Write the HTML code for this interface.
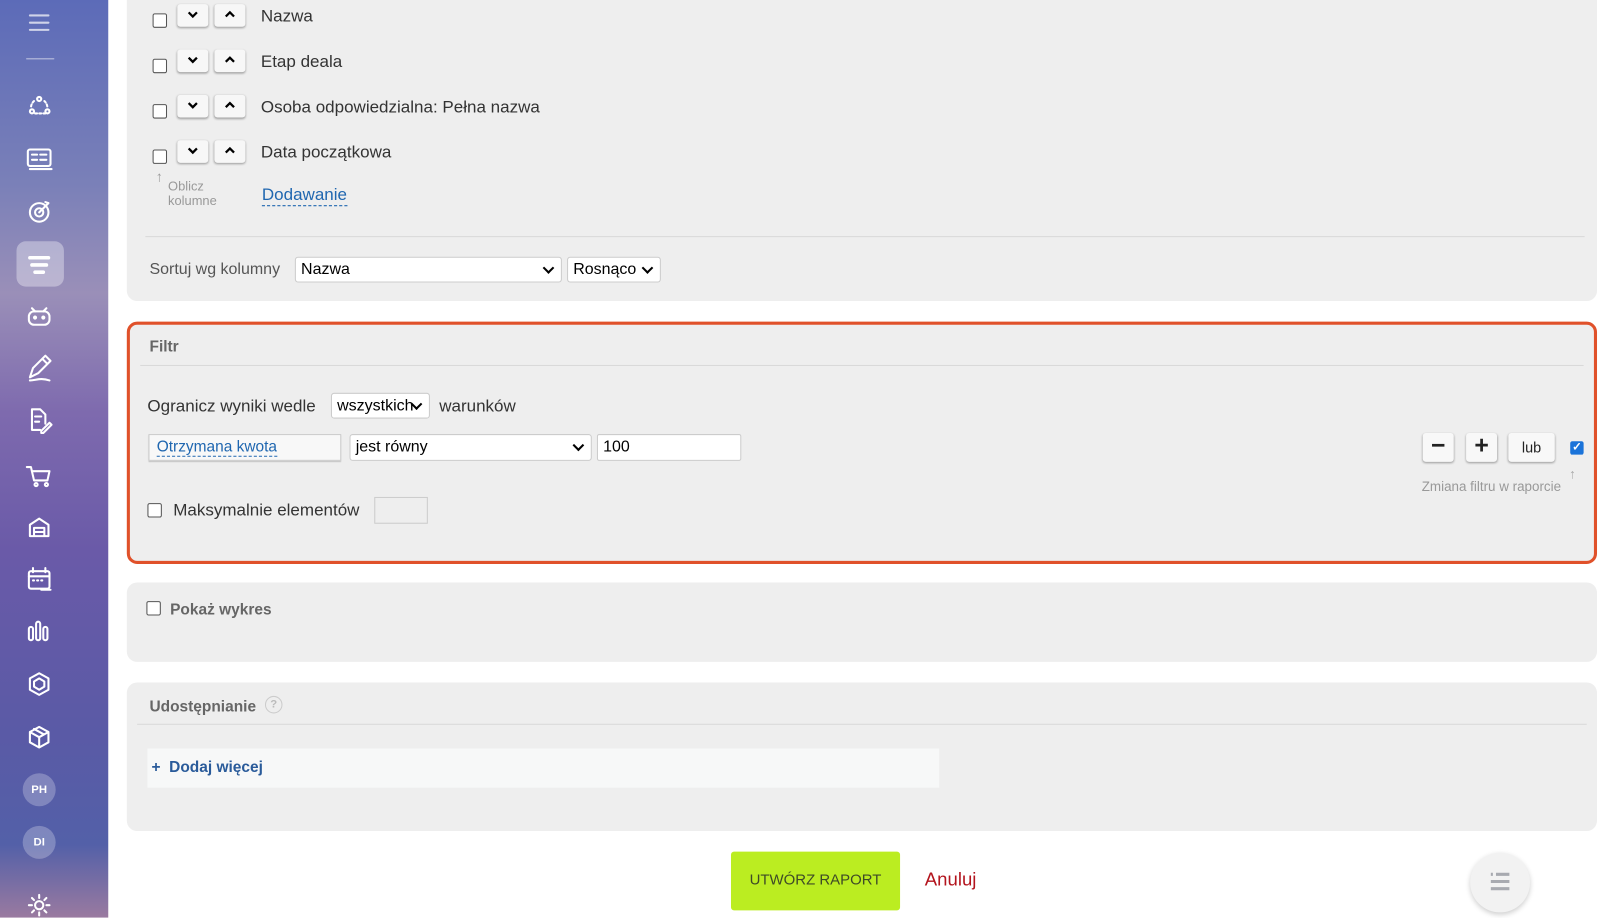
<!DOCTYPE html>
<html><head><meta charset="utf-8"><style>
html,body{margin:0;padding:0;width:1616px;height:915px;overflow:hidden;background:#fff;font-family:"Liberation Sans",sans-serif;}
#w{position:absolute;left:0;top:0;width:1560px;height:890px;transform:scale(1.031);transform-origin:0 0;}
.a{position:absolute}
#sb{left:0;top:0;width:105px;height:890px;background:linear-gradient(180deg,#5c6bb8 0%,#7a80b8 20%,#9a8fb8 32%,#7e6aae 45%,#6a5aa8 60%,#5a5aa6 80%,#5360a8 92%,#9a7aa0 100%);}
.card{position:absolute;left:123px;width:1426px;background:#eeeeee;border-radius:10px}
.cb{position:absolute;width:12px;height:12px;border:1px solid #555;border-radius:2px;background:#fff}
.ab{position:absolute;width:30px;height:22px;background:#f7f7f7;border-radius:3px;box-shadow:0 1px 2px rgba(0,0,0,.35)}
.ab svg{position:absolute;left:9px;top:5px}
.t{position:absolute;font-size:16.5px;color:#333;white-space:nowrap}
.sel{position:absolute;background:#fff;border:1px solid #ccc;border-radius:3px;font-size:15.5px;color:#000;box-sizing:border-box;padding:2px 5px;line-height:20px}
.dd:after{content:"";position:absolute;right:8px;top:6px;width:6px;height:6px;border-right:2px solid #000;border-bottom:2px solid #000;transform:rotate(45deg)}
.hr{position:absolute;left:18px;right:12px;height:1px;background:#d9d9d9}
.btn{position:absolute;background:#f8f8f8;border-radius:3px;box-shadow:0 1px 2px rgba(0,0,0,.35);text-align:center;color:#222}
</style></head><body><div id="w">
<div id="sb" class="a">
<svg class="a" style="left:0;top:0" width="105" height="890" fill="none" stroke="#fff" stroke-width="2" stroke-linecap="round" stroke-linejoin="round">
<g opacity=".7"><path d="M29 15h18M29 22h18M29 29h18"/><path d="M26 57h26" stroke-width="1.5" opacity=".6"/></g>
<circle cx="38" cy="96" r="2"/><circle cx="31" cy="108" r="2"/><circle cx="46" cy="108" r="2"/><path d="M33 98a9 9 0 0 0-3 7M43 98a9 9 0 0 1 3 7M34 110h10" stroke-dasharray="2 2"/>
<rect x="27" y="145" width="22" height="16" rx="2"/><path d="M31 150h5M31 155h5M39 150h6M39 155h6M29 164h21"/>
<circle cx="38" cy="206" r="9"/><circle cx="38" cy="206" r="4"/><path d="M38 206l9-9M44 196l3 1"/>
<rect x="16" y="234" width="46" height="44" rx="9" fill="#fff" fill-opacity=".35" stroke="none"/>
<path d="M29 250h18M31 257h14M34 264h8" stroke-width="3.5"/>
<rect x="28" y="302" width="20" height="13" rx="5"/><circle cx="34" cy="308" r="1"/><circle cx="42" cy="308" r="1"/><path d="M31 299l3 3M45 299l-3 3"/>
<path d="M29 366l3-9 12-12 5 5-12 12zM41 348l5 5M29 369c6 0 10-3 19 0"/>
<path d="M44 411V402l-5-5H31v20h8M34 404h6M34 409h4M40 418l8-8 2 2-8 8h-2z"/>
<path d="M26 453h4l3 13h13l2-9H32"/><circle cx="35" cy="470" r="1.5"/><circle cx="45" cy="470" r="1.5"/>
<path d="M29 520v-11l9-6 9 6v11zM33 520v-8h10v8M33 516h10"/>
<rect x="28" y="554" width="20" height="17" rx="2"/><path d="M28 559h20M32 551v4M44 551v4M32 563h1M36 563h1M40 563h1M40 572h9"/>
<rect x="28" y="608" width="4" height="13" rx="2"/><rect x="35" y="603" width="4" height="18" rx="2"/><rect x="42" y="608" width="4" height="13" rx="2"/>
<path d="M38 653l9 5v11l-9 5-9-5v-11z"/><path d="M38 658l5 3v5l-5 3-5-3v-5z"/>
<path d="M38 705l9 5v10l-9 5-9-5v-10zM29 710l9 5 9-5M38 715v10M33 707l9 5"/>
<circle cx="38" cy="878" r="4"/><path d="M38 868v3M38 885v3M28 878h3M45 878h3M31 871l2 2M43 883l2 2M45 871l-2 2M31 885l2-2"/>
</svg>
<div class="a" style="left:22px;top:750px;width:32px;height:32px;border-radius:50%;background:rgba(255,255,255,.25);color:#fff;font-size:11px;font-weight:bold;text-align:center;line-height:32px">PH</div>
<div class="a" style="left:22px;top:801px;width:32px;height:32px;border-radius:50%;background:rgba(255,255,255,.25);color:#fff;font-size:11px;font-weight:bold;text-align:center;line-height:32px">DI</div>
</div>

<div class="card" style="top:-10px;height:302px">
<div class="cb" style="left:25px;top:23px"></div><div class="ab" style="left:49px;top:14px"><svg width="12" height="10"><path d="M2 3l4 4 4-4" stroke="#000" stroke-width="2.2" fill="none"/></svg></div><div class="ab" style="left:85px;top:14px"><svg width="12" height="10"><path d="M2 7l4-4 4 4" stroke="#000" stroke-width="2.2" fill="none"/></svg></div><div class="t" style="left:130px;top:17px">Nazwa</div>
<div class="cb" style="left:25px;top:67px"></div><div class="ab" style="left:49px;top:58px"><svg width="12" height="10"><path d="M2 3l4 4 4-4" stroke="#000" stroke-width="2.2" fill="none"/></svg></div><div class="ab" style="left:85px;top:58px"><svg width="12" height="10"><path d="M2 7l4-4 4 4" stroke="#000" stroke-width="2.2" fill="none"/></svg></div><div class="t" style="left:130px;top:61px">Etap deala</div>
<div class="cb" style="left:25px;top:111px"></div><div class="ab" style="left:49px;top:102px"><svg width="12" height="10"><path d="M2 3l4 4 4-4" stroke="#000" stroke-width="2.2" fill="none"/></svg></div><div class="ab" style="left:85px;top:102px"><svg width="12" height="10"><path d="M2 7l4-4 4 4" stroke="#000" stroke-width="2.2" fill="none"/></svg></div><div class="t" style="left:130px;top:105px">Osoba odpowiedzialna: Pełna nazwa</div>
<div class="cb" style="left:25px;top:155px"></div><div class="ab" style="left:49px;top:146px"><svg width="12" height="10"><path d="M2 3l4 4 4-4" stroke="#000" stroke-width="2.2" fill="none"/></svg></div><div class="ab" style="left:85px;top:146px"><svg width="12" height="10"><path d="M2 7l4-4 4 4" stroke="#000" stroke-width="2.2" fill="none"/></svg></div><div class="t" style="left:130px;top:149px">Data początkowa</div>
<div class="t" style="left:28px;top:173px;font-size:14px;color:#999">↑</div>
<div class="t" style="left:40px;top:184px;font-size:12.5px;color:#999;line-height:14px">Oblicz<br>kolumne</div>
<div class="t" style="left:131px;top:189px;color:#2067b0;border-bottom:1px dashed #2067b0;line-height:20px">Dodawanie</div>
<div class="hr" style="top:239px"></div>
<div class="t" style="left:22px;top:263px;font-size:15.5px;color:#555">Sortuj wg kolumny</div>
<div class="sel dd" style="left:163px;top:259px;width:259px;height:25px">Nazwa</div>
<div class="sel dd" style="left:427px;top:259px;width:91px;height:25px">Rosnąco</div>
</div>

<div class="card" style="top:312px;height:235px;box-sizing:border-box;border:3px solid #e0512a">
<div class="t" style="left:19px;top:13px;font-size:15px;font-weight:bold;color:#666">Filtr</div>
<div class="hr" style="top:39px;left:10px;right:10px"></div>
<div class="t" style="left:17px;top:70px">Ogranicz wyniki wedle</div>
<div class="sel dd" style="left:195px;top:66px;width:96px;height:25px;overflow:hidden">wszystkich</div>
<div class="t" style="left:300px;top:70px">warunków</div>
<div class="a" style="left:18px;top:106px;width:187px;height:26px;background:#f8f8f8;border:1px solid #ccc;box-sizing:border-box;box-shadow:0 1px 1px rgba(0,0,0,.2)"><span style="position:absolute;left:7px;top:4px;font-size:15px;color:#2067b0;border-bottom:1px dashed #2067b0;line-height:16px">Otrzymana kwota</span></div>
<div class="sel dd" style="left:213px;top:106px;width:235px;height:26px">jest równy</div>
<div class="sel" style="left:453px;top:106px;width:140px;height:26px;border-radius:2px">100</div>
<div class="btn" style="left:1254px;top:105px;width:30px;height:28px;font-size:24px;line-height:26px;font-weight:bold">−</div>
<div class="btn" style="left:1296px;top:105px;width:30px;height:28px;font-size:24px;line-height:26px;font-weight:bold">+</div>
<div class="btn" style="left:1337px;top:105px;width:45px;height:28px;font-size:14px;line-height:28px">lub</div>
<div class="a" style="left:1397px;top:113px;width:13px;height:13px;background:#1a73d9;border-radius:2px;color:#fff;font-size:11px;line-height:13px;text-align:center;font-weight:bold">✓</div>
<div class="t" style="left:1396px;top:137px;font-size:13px;color:#aaa">↑</div>
<div class="t" style="left:1253px;top:149px;font-size:13px;color:#999">Zmiana filtru w raporcie</div>
<div class="cb" style="left:17px;top:173px"></div>
<div class="t" style="left:42px;top:171px">Maksymalnie elementów</div>
<div class="a" style="left:237px;top:167px;width:50px;height:24px;border:1px solid #ccc;background:#eee"></div>
</div>

<div class="card" style="top:565px;height:77px">
<div class="cb" style="left:19px;top:18px"></div>
<div class="t" style="left:42px;top:18px;font-size:15px;font-weight:bold;color:#666">Pokaż wykres</div>
</div>

<div class="card" style="top:662px;height:144px">
<div class="t" style="left:22px;top:15px;font-size:15px;font-weight:bold;color:#666">Udostępnianie</div>
<div class="a" style="left:134px;top:13px;width:15px;height:15px;border-radius:50%;border:1px solid #ccc;color:#bbb;font-size:11px;text-align:center;line-height:15px;font-weight:bold">?</div>
<div class="hr" style="top:40px;left:10px;right:10px"></div>
<div class="a" style="left:20px;top:64px;width:768px;height:38px;background:#f7f8f8"></div>
<div class="t" style="left:24px;top:74px;font-size:15px;font-weight:bold;color:#2a5b9a">+&nbsp; Dodaj więcej</div>
</div>

<div class="a" style="left:709px;top:826px;width:164px;height:57px;background:#bbed21;border-radius:3px;color:#3e4a27;font-size:14.5px;text-align:center;line-height:57px">UTWÓRZ RAPORT</div>
<div class="t" style="left:897px;top:843px;color:#b3141d;font-size:18px">Anuluj</div>
<div class="a" style="left:1426px;top:827px;width:58px;height:58px;border-radius:50%;background:#f2f2f2;box-shadow:0 2px 5px rgba(0,0,0,.2)">
<svg width="58" height="58"><g stroke="#a8aab0" stroke-width="3"><path d="M20 21h2M25 21h13M20 28h18M20 35h18"/></g></svg></div>
</div></body></html>
